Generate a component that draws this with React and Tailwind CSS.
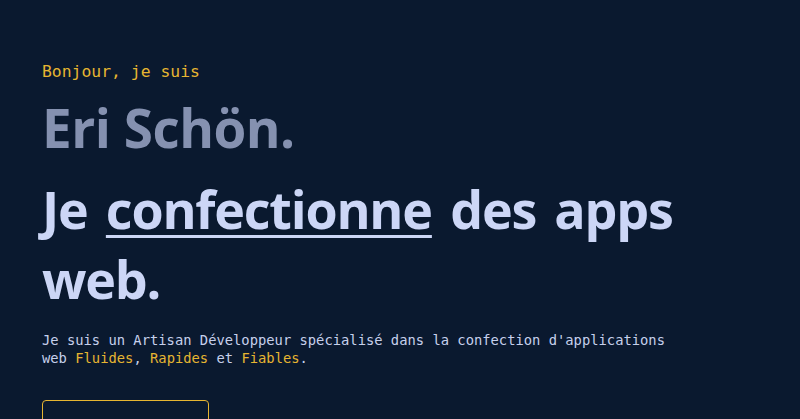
export default function App() {
  const mono = { fontFamily: '"DejaVu Sans Mono", "Liberation Mono", monospace' };
  const sans = { fontFamily: '"Open Sans", "Noto Sans", sans-serif' };
  return (
    <div className="min-h-screen w-full bg-[#0a192f] overflow-hidden">
      <section className="pl-[42px] pr-8 pt-[62px]">
        <p className="text-[16.4px] leading-[20px] text-[#e6b531] mb-[18px]" style={mono}>
          Bonjour, je suis
        </p>
        <h1
          className="text-[53px] leading-[56px] font-bold text-[#8591b0] tracking-[-0.5px]"
          style={sans}
        >
          Eri Schön.
        </h1>
        <h2
          className="mt-[18px] text-[52px] leading-[70px] font-bold text-[#ccd6f6] tracking-[-1.2px] [word-spacing:6px]"
          style={sans}
        >
          Je{" "}
          <span className="underline decoration-[3px] underline-offset-[6px]">confectionne</span>{" "}
          des apps web.
        </h2>
        <p
          className="mt-[17px] max-w-[640px] text-[13.8px] leading-[18px] text-[#c6d0ec]"
          style={mono}
        >
          Je suis un Artisan Développeur spécialisé dans la confection d'applications web{" "}
          <span className="text-[#e6b531]">Fluides</span>,{" "}
          <span className="text-[#e6b531]">Rapides</span> et{" "}
          <span className="text-[#e6b531]">Fiables</span>.
        </p>
        <button
          className="mt-[33px] w-[167px] h-[56px] rounded-[4px] border border-[#e6b531]"
          style={mono}
        ></button>
      </section>
    </div>
  );
}
